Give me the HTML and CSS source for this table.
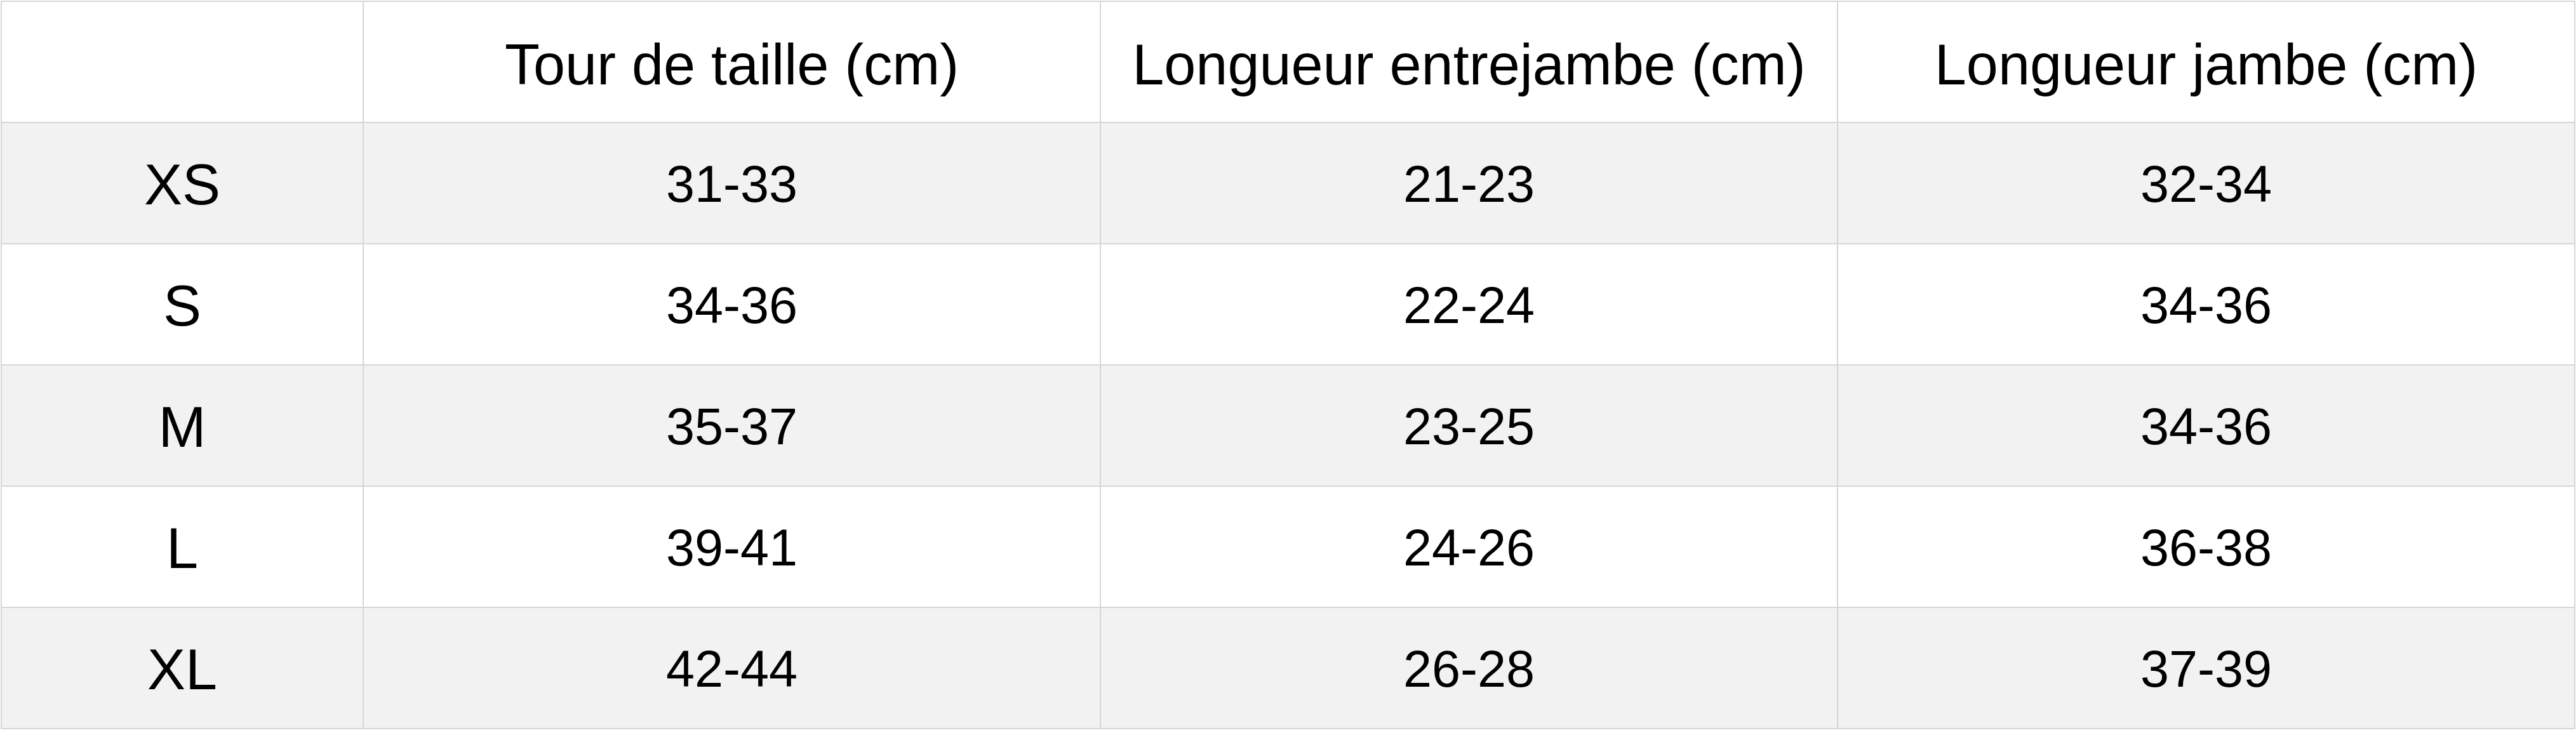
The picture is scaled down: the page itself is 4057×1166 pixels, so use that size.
FILE: index.html
```html
<!DOCTYPE html>
<html lang="fr">
<head>
<meta charset="utf-8">
<title>Guide des tailles</title>
<link rel="stylesheet" href="styles.css">
</head>
<body>
<table class="size-table">
  <colgroup>
    <col class="col-size">
    <col class="col-data">
    <col class="col-data">
    <col class="col-data">
  </colgroup>
  <thead>
    <tr>
      <th class="corner"></th>
      <th>Tour de taille (cm)</th>
      <th>Longueur entrejambe (cm)</th>
      <th>Longueur jambe (cm)</th>
    </tr>
  </thead>
  <tbody>
    <tr><th class="size">XS</th><td>31-33</td><td>21-23</td><td>32-34</td></tr>
    <tr><th class="size">S</th><td>34-36</td><td>22-24</td><td>34-36</td></tr>
    <tr><th class="size">M</th><td>35-37</td><td>23-25</td><td>34-36</td></tr>
    <tr><th class="size">L</th><td>39-41</td><td>24-26</td><td>36-38</td></tr>
    <tr><th class="size">XL</th><td>42-44</td><td>26-28</td><td>37-39</td></tr>
  </tbody>
</table>
</body>
</html>
```

FILE: styles.css
```css
html, body {
  margin: 0;
  padding: 0;
  background: #ffffff;
}

body {
  padding: 1px;
}

.size-table {
  border-collapse: collapse;
  table-layout: fixed;
  width: 4053px;
  font-family: "Liberation Sans", Arial, sans-serif;
  color: #000000;
}

.col-size {
  width: 570px;
}

.col-data {
  width: 1161px;
}

.size-table th,
.size-table td {
  border: 2px solid #d6d6d6;
  height: 185px;
  padding: 4px 0 0 0;
  text-align: center;
  vertical-align: middle;
  font-weight: normal;
  box-sizing: content-box;
}

.size-table thead th {
  font-size: 90px;
  line-height: 1;
  padding-top: 8px;
  height: 181px;
}

.size-table th.size {
  font-size: 90px;
  line-height: 1;
  padding-top: 4px;
}

.size-table td {
  font-size: 81px;
  line-height: 1;
}

.size-table tbody tr:nth-child(odd) {
  background: #f2f2f2;
}
```
